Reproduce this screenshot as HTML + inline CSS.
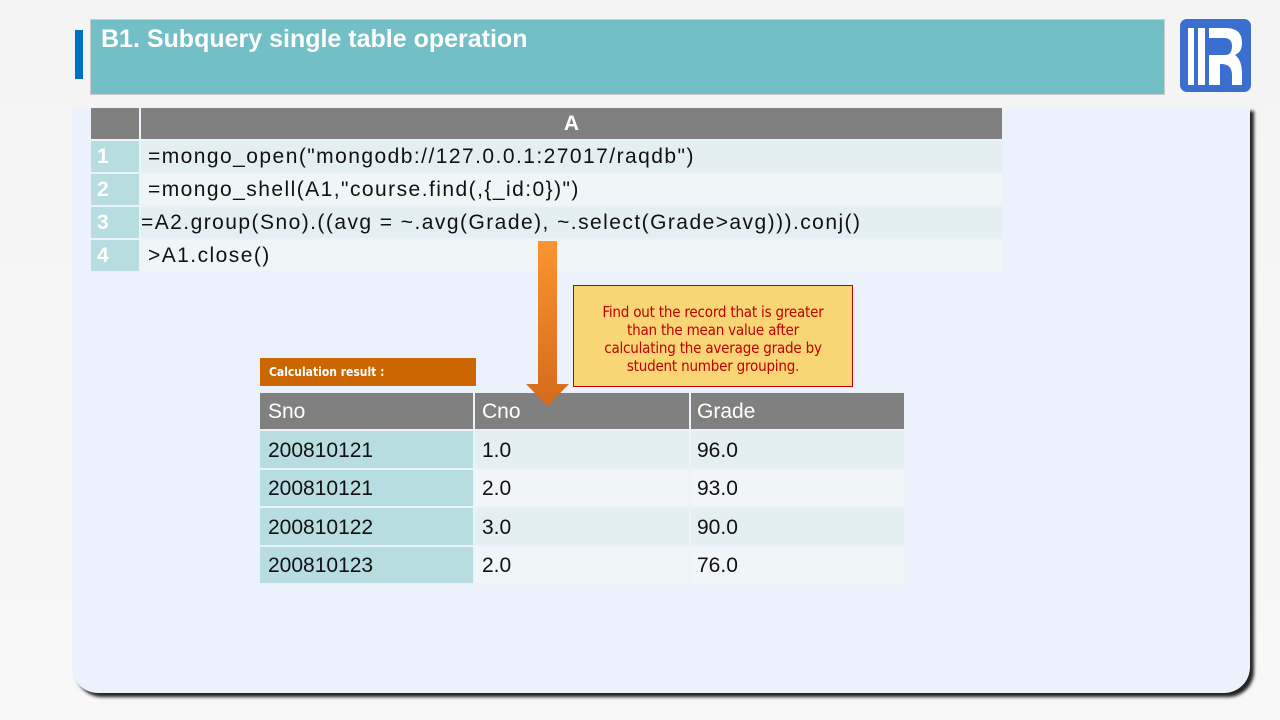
<!DOCTYPE html>
<html><head><meta charset="utf-8"><style>
*{margin:0;padding:0;box-sizing:border-box}
body{width:1280px;height:720px;background:linear-gradient(#f4f4f4,#f8f8f8);position:relative;overflow:hidden;font-family:"Liberation Sans",sans-serif}
.abs{position:absolute}
.panel{left:72px;top:107px;width:1178px;height:586px;background:#ebf2fc;border-radius:0 0 26px 26px;box-shadow:4px 4px 3px #222}
.title{left:90px;top:19px;width:1075px;height:76px;background:#72bfc5;border:1px solid #ccc;color:#fff;font:bold 25px "Liberation Sans",sans-serif;padding:5px 10px}
.mark{left:75px;top:30px;width:8px;height:49px;background:#0070c0}
.c{position:absolute;font-size:21px;color:#111;line-height:31px;white-space:nowrap}
.code{letter-spacing:1.45px}
.n{background:#b7dde0;color:#fff;font-weight:bold;padding-left:6px}
.r{background:#b7dde0}
.o{background:#e3eff1}
.e{background:#f0f6f8}
.h{background:#808080;color:#fff}
</style></head><body>
<div class="abs panel"></div>
<div class="abs mark"></div>
<div class="abs title">B1. Subquery single table operation</div>
<svg class="abs" style="left:1180px;top:19px" width="71" height="73" viewBox="0 0 71 73">
<rect width="71" height="73" rx="7" fill="#3a6fd0"/>
<rect x="8" y="9" width="6" height="57" fill="#fff"/><rect x="18" y="9" width="7" height="57" fill="#fff"/>
<path d="M29 9 H46 Q62 9 62 24 Q62 33 55 36 Q62 41 62 55 V66 H52 V56 Q52 45 41 45 H40 V66 H29 V36 H45 Q52 36 52 27 Q52 19 44 19 H29 Z" fill="#fff"/>
</svg>
<!-- code table -->
<div class="c h" style="left:91px;top:108px;width:48px;height:31px"></div>
<div class="c h" style="left:141px;top:108px;width:861px;height:31px;text-align:center;font-weight:bold">A</div>
<div class="c n" style="left:91px;top:141px;width:48px">1</div>
<div class="c o code" style="left:141px;top:141px;width:861px;padding-left:7px">=mongo_open("mongodb://127.0.0.1:27017/raqdb")</div>
<div class="c n" style="left:91px;top:174px;width:48px">2</div>
<div class="c e code" style="left:141px;top:174px;width:861px;padding-left:7px">=mongo_shell(A1,"course.find(,{_id:0})")</div>
<div class="c n" style="left:91px;top:207px;width:48px">3</div>
<div class="c o code" style="left:141px;top:207px;width:861px">=A2.group(Sno).((avg = ~.avg(Grade), ~.select(Grade&gt;avg))).conj()</div>
<div class="c n" style="left:91px;top:240px;width:48px">4</div>
<div class="c e code" style="left:141px;top:240px;width:861px;padding-left:7px">&gt;A1.close()</div>
<div class="abs" style="left:573px;top:285px;width:280px;height:102px;background:#f8d676;border:1px solid #c00000;color:#c00000;font:15px 'DejaVu Sans Condensed','DejaVu Sans',sans-serif;text-align:center;line-height:18px;padding-top:17px;letter-spacing:-0.2px">Find out the record that is greater<br>than the mean value after<br>calculating the average grade by<br>student number grouping.</div>
<div class="abs" style="left:260px;top:358px;width:216px;height:28px;background:#cc6600;color:#fff;font:bold 12px 'DejaVu Sans Condensed',sans-serif;line-height:28px;padding-left:9px">Calculation result :</div>
<!-- result table -->
<div class="c h" style="left:260px;top:393px;width:213px;height:36px;line-height:38px;padding-left:8px">Sno</div>
<div class="c h" style="left:475px;top:393px;width:214px;height:36px;line-height:38px;padding-left:7px">Cno</div>
<div class="c h" style="left:691px;top:393px;width:213px;height:36px;line-height:38px;padding-left:6px">Grade</div>
<div class="c r" style="left:260px;top:431px;width:213px;height:37px;line-height:39px;padding-left:8px">200810121</div>
<div class="c o" style="left:475px;top:431px;width:214px;height:37px;line-height:39px;padding-left:7px">1.0</div>
<div class="c o" style="left:691px;top:431px;width:213px;height:37px;line-height:39px;padding-left:6px">96.0</div>
<div class="c r" style="left:260px;top:470px;width:213px;height:36px;line-height:38px;padding-left:8px">200810121</div>
<div class="c e" style="left:475px;top:470px;width:214px;height:36px;line-height:38px;padding-left:7px">2.0</div>
<div class="c e" style="left:691px;top:470px;width:213px;height:36px;line-height:38px;padding-left:6px">93.0</div>
<div class="c r" style="left:260px;top:508px;width:213px;height:37px;line-height:39px;padding-left:8px">200810122</div>
<div class="c o" style="left:475px;top:508px;width:214px;height:37px;line-height:39px;padding-left:7px">3.0</div>
<div class="c o" style="left:691px;top:508px;width:213px;height:37px;line-height:39px;padding-left:6px">90.0</div>
<div class="c r" style="left:260px;top:547px;width:213px;height:36px;line-height:38px;padding-left:8px">200810123</div>
<div class="c e" style="left:475px;top:547px;width:214px;height:36px;line-height:38px;padding-left:7px">2.0</div>
<div class="c e" style="left:691px;top:547px;width:213px;height:36px;line-height:38px;padding-left:6px">76.0</div>
<!-- arrow -->
<svg class="abs" style="left:526px;top:240px;z-index:5" width="44" height="168">
<defs><linearGradient id="g" x1="0" y1="0" x2="0" y2="1"><stop offset="0" stop-color="#fb9430"/><stop offset="1" stop-color="#d46a1c"/></linearGradient></defs>
<path d="M12 1 H31 V144 H43 L21.5 166 L0 144 H12 Z" fill="url(#g)"/>
</svg>
</body></html>
